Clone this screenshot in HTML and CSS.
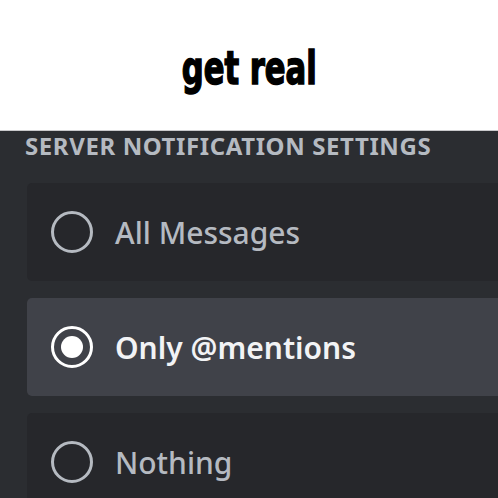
FILE: index.html
```html
<!DOCTYPE html>
<html lang="en">
<head>
    <meta charset="UTF-8">
    <meta name="viewport" content="width=device-width, initial-scale=1.0">
    <title>get real</title>
    <link rel="stylesheet" href="styles.css">
</head>
<body>
    <div class="caption">
        <h1>get real</h1>
    </div>
    <div class="panel">
        <h2 class="heading">Server Notification Settings</h2>
        <div class="options">
            <div class="option">
                <span class="radio"></span>
                <span class="label">All Messages</span>
            </div>
            <div class="option selected">
                <span class="radio"></span>
                <span class="label">Only @mentions</span>
            </div>
            <div class="option">
                <span class="radio"></span>
                <span class="label">Nothing</span>
            </div>
        </div>
    </div>
</body>
</html>
```

FILE: styles.css
```css
body {
    margin: 0;
    width: 498px;
    height: 498px;
    overflow: hidden;
    background: #ffffff;
    font-family: "Noto Sans", "Open Sans", sans-serif;
}
.caption {
    height: 130px;
    display: flex;
    justify-content: center;
    align-items: center;
}
.caption h1 {
    display: inline-block;
    margin: 0;
    margin-top: 6px;
    font-family: "DejaVu Sans Condensed", "DejaVu Sans", sans-serif;
    font-weight: 700;
    font-size: 46px;
    color: #000;
    -webkit-text-stroke: 1.5px #000;
    transform: scaleX(0.74);
}
.panel {
    height: 368px;
    background: #2b2d31;
    border-top: 1px solid #c9c9cb;
    padding-left: 27px;
    overflow: hidden;
}
.heading {
    margin: 0 0 0 -2px;
    font-size: 24px;
    font-weight: 700;
    letter-spacing: 0.6px;
    text-transform: uppercase;
    color: #b5bac1;
    line-height: 30px;
}
.options {
    display: flex;
    flex-direction: column;
    gap: 17px;
    margin-top: 22px;
    margin-right: -12px;
}
.option {
    display: flex;
    align-items: center;
    gap: 22px;
    height: 98px;
    padding-left: 24px;
    background: #26272b;
    border-radius: 5px;
}
.option.selected {
    background: #404249;
}
.radio {
    box-sizing: border-box;
    width: 42px;
    height: 42px;
    border: 3px solid #b5bac1;
    border-radius: 50%;
    display: flex;
    justify-content: center;
    align-items: center;
}
.selected .radio {
    border-color: #ffffff;
}
.selected .radio::after {
    content: "";
    width: 22px;
    height: 22px;
    border-radius: 50%;
    background: #ffffff;
}
.label {
    font-size: 30px;
    font-weight: 500;
    color: #b5bac1;
}
.selected .label {
    font-weight: 600;
    color: #f2f3f5;
}
```
